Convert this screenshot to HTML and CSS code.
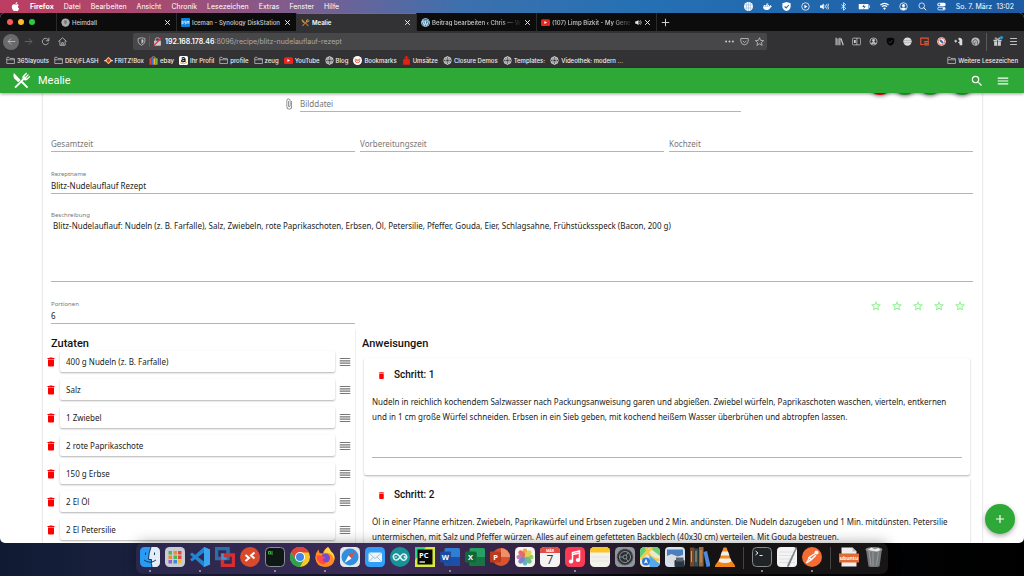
FILE: index.html
```html
<!DOCTYPE html>
<html lang="de">
<head>
<meta charset="utf-8">
<title>Mealie</title>
<link rel="stylesheet" href="styles.css">
</head>
<body>
<svg class="sprite" aria-hidden="true">
  <symbol id="trash" viewBox="0 0 24 24"><path d="M19,4H15.5L14.5,3H9.5L8.5,4H5V6H19M6,19A2,2 0 0,0 8,21H16A2,2 0 0,0 18,19V7H6V19Z"/></symbol>
  <symbol id="drag" viewBox="0 0 24 24"><path d="M3,15H21V13H3V15M3,19H21V17H3V19M3,11H21V9H3V11M3,5V7H21V5H3Z"/></symbol>
  <symbol id="star" viewBox="0 0 24 24"><path d="M12,15.39L8.24,17.66L9.23,13.38L5.91,10.5L10.29,10.13L12,6.09L13.71,10.13L18.09,10.5L14.77,13.38L15.76,17.66M22,9.24L14.81,8.63L12,2L9.19,8.63L2,9.24L7.45,13.97L5.82,21L12,17.27L18.18,21L16.54,13.97L22,9.24Z"/></symbol>
  <symbol id="search" viewBox="0 0 24 24"><path d="M9.5,3A6.5,6.5 0 0,1 16,9.5C16,11.11 15.41,12.59 14.44,13.73L14.71,14H15.5L20.5,19L19,20.5L14,15.5V14.71L13.73,14.44C12.59,15.41 11.11,16 9.5,16A6.5,6.5 0 0,1 3,9.5A6.5,6.5 0 0,1 9.5,3M9.5,5C7,5 5,7 5,9.5C5,12 7,14 9.5,14C12,14 14,12 14,9.5C14,7 12,5 9.5,5Z"/></symbol>
  <symbol id="menu" viewBox="0 0 24 24"><path d="M3,6H21V8H3V6M3,11H21V13H3V11M3,16H21V18H3V16Z"/></symbol>
  <symbol id="plus" viewBox="0 0 24 24"><path d="M19,13H13V19H11V13H5V11H11V5H13V11H19V13Z"/></symbol>
  <symbol id="close" viewBox="0 0 24 24"><path d="M4 4L20 20M20 4L4 20" stroke="currentColor" stroke-width="3.4" fill="none"/></symbol>
  <symbol id="folder" viewBox="0 0 24 24"><path d="M2 20V5a1.500 1.500 0 0 1 1.500-1.500H8l2.500 3H21a1.500 1.500 0 0 1 1.500 1.500V20zM2 10h20" stroke="currentColor" stroke-width="1.900" fill="none" opacity=".8"/></symbol>
  <symbol id="globe" viewBox="0 0 24 24"><g stroke="currentColor" stroke-width="2" fill="none"><circle cx="12" cy="12" r="10"/><ellipse cx="12" cy="12" rx="4.500" ry="10"/><path d="M3 8h18M3 16h18"/></g></symbol>
  <symbol id="cutlery" viewBox="0 0 24 24"><path d="M2.500 2.500C1 6 2 9 4.500 11.200L8 14.200 10.800 11.400zM13.400 13L20.500 20.100 18.800 21.800 11.700 14.700 4.700 21.800 3 20.100 13.300 9.800C12.500 8 13.300 6.700 14.500 5.500L18 2l1 1-3.300 3.800.8.800L20.300 4l1.100 1.100L17.700 8.800l.8.800L22.200 6.300l1 1-3.500 3.500C18.200 12.200 16.500 12.500 15 11.500z"/></symbol>
</svg>

<header class="menubar">
  <nav class="menus" aria-label="Menüleiste">
    <svg class="apple" viewBox="0 0 24 24"><path d="M12.152 6.896c-.948 0-2.415-1.078-3.960-1.040-2.040.027-3.910 1.183-4.961 3.014-2.117 3.675-.546 9.103 1.519 12.090 1.013 1.454 2.208 3.090 3.792 3.039 1.520-.065 2.090-.987 3.935-.987 1.831 0 2.350.987 3.960.948 1.637-.026 2.676-1.480 3.676-2.948 1.156-1.688 1.636-3.325 1.662-3.415-.039-.013-3.182-1.221-3.220-4.857-.026-3.040 2.480-4.494 2.597-4.559-1.429-2.090-3.623-2.324-4.390-2.376-2-.156-3.675 1.090-4.610 1.090zM15.530 3.830c.843-1.012 1.400-2.427 1.245-3.830-1.207.052-2.662.805-3.532 1.818-.780.896-1.454 2.338-1.273 3.714 1.338.104 2.715-.688 3.559-1.701"/></svg>
    <button class="app">Firefox</button><button>Datei</button><button>Bearbeiten</button><button>Ansicht</button><button>Chronik</button><button>Lesezeichen</button><button>Extras</button><button>Fenster</button><button>Hilfe</button>
  </nav>
  <div class="status">
    <svg viewBox="0 0 24 24"><circle cx="12" cy="12" r="12"/><path d="M2 8h20M2 16h20M12 0v24M7 1v22M17 1v22" stroke="#8fb3d8" stroke-width="1.500"/></svg>
    <svg viewBox="0 0 24 24"><path d="M0 12h17c1-3 2-3 3-4 1 1 1.500 2 1.500 3l2.500.5c-1 2-2 2.500-4 3-2 5-6 7-11 7-6 0-9-4-9-9.500zM2 8h4v3H2zM7 8h4v3H7zM12 8h4v3h-4zM9 4h5v3H9z"/></svg>
    <svg viewBox="0 0 24 24"><path d="M12 0l11 3v8c0 7-5 11-11 13C6 22 1 18 1 11V3z"/><path d="M7 12l4 4 7-8" stroke="#2665ad" stroke-width="3" fill="none"/></svg>
    <svg viewBox="0 0 24 24"><circle cx="12" cy="12" r="10" fill="none" stroke="#fff" stroke-width="2"/><path d="M9 7l8 5-8 5z"/></svg>
    <svg viewBox="0 0 24 24"><path d="M0 9h4l6-5v16l-6-5H0z"/><path d="M13 8q3 4 0 8M17 6q5 6 0 12M21 4q7 8 0 16" stroke="#fff" stroke-width="2" fill="none"/></svg>
    <svg viewBox="0 0 24 24"><path d="M6 7l12 10-6 5V2l6 5L6 17" fill="none" stroke="#fff" stroke-width="2"/></svg>
    <svg class="battery" viewBox="0 0 32 24"><path d="M2 5h26v14H2zM29.500 9h2v6h-2z"/><path d="M17 5l-6 8h5l-2 6 7-8h-5z" fill="#2260a8"/></svg>
    <svg viewBox="0 0 24 24"><path d="M1 8q11-9 22 0M5 12.500q7-6 14 0" fill="none" stroke="#fff" stroke-width="3"/><path d="M8 16q4-3 8 0l-4 5z"/></svg>
    <svg viewBox="0 0 24 24"><circle cx="12" cy="12" r="10" fill="none" stroke="#fff" stroke-width="2"/><circle cx="12" cy="9" r="4"/><path d="M5 18q7-7 14 0-7 7-14 0"/></svg>
    <svg viewBox="0 0 24 24"><circle cx="10" cy="10" r="7.500" fill="none" stroke="#fff" stroke-width="2"/><path d="M15 15l7 7" stroke="#fff" stroke-width="2.500"/></svg>
    <svg viewBox="0 0 24 24"><rect x="1" y="2" width="22" height="9" rx="4"/><circle cx="6" cy="6.500" r="2.500" fill="#2260a8"/><rect x="2" y="14" width="20" height="7" rx="3.500" fill="none" stroke="#fff" stroke-width="2"/><circle cx="18" cy="17.500" r="3"/></svg>
    <time>So. 7. März&nbsp; 13:02</time>
  </div>
</header>

<section class="window">
  <div class="tabs">
    <div class="lights"><i class="red"></i><i class="amber"></i><i class="green"></i></div>
    <div class="tab"><svg class="fav" viewBox="0 0 24 24"><circle cx="12" cy="12" r="11" fill="#aaa"/><path d="M8 5l4 3 4-3-1 8-3 4-3-4z" fill="#777"/></svg><span>Heimdall</span><button aria-label="Tab schließen"><svg><use href="#close"/></svg></button></div>
    <div class="tab"><svg class="fav" viewBox="0 0 24 24"><rect width="24" height="24" rx="2" fill="#0d7fdc"/><path d="M3 8v8h2q3-4 0-8zM13 8h-3v4h3v4h-3M16 16V8l2.500 4L21 8v8" stroke="#fff" stroke-width="1.800" fill="none"/></svg><span>Iceman - Synology DiskStation</span><button aria-label="Tab schließen"><svg><use href="#close"/></svg></button></div>
    <div class="tab active"><svg class="fav orange"><use href="#cutlery"/></svg><span>Mealie</span><button aria-label="Tab schließen"><svg><use href="#close"/></svg></button></div>
    <div class="tab"><svg class="fav" viewBox="0 0 24 24"><circle cx="12" cy="12" r="11.500" fill="#e8f1f5"/><circle cx="12" cy="12" r="10" fill="#3a7fa5"/><path d="M3 8h5M4 8l5 12 3-9M9 8h6M10 8l5 12 4-9q0-3-2-5" stroke="#fff" stroke-width="2" fill="none"/></svg><span class="fade">Beitrag bearbeiten ‹ Chris — W</span><button aria-label="Tab schließen"><svg><use href="#close"/></svg></button></div>
    <div class="tab"><svg class="fav" viewBox="0 0 24 24"><rect y="3" width="24" height="18" rx="4" fill="#e8281f"/><path d="M9 8l7 4-7 4z" fill="#fff"/></svg><span class="fade">(107) Limp Bizkit - My Gene</span><svg class="sound" viewBox="0 0 24 24"><path d="M1 8h5l6-5v18l-6-5H1z"/><path d="M15 7q5 5 0 10M18 4q8 8 0 16" fill="none" stroke="#eee" stroke-width="2"/></svg><button aria-label="Tab schließen"><svg><use href="#close"/></svg></button></div>
    <button class="newtab" aria-label="Neuer Tab"><svg viewBox="0 0 24 24"><path d="M12 2v20M2 12h20" stroke="#ddd" stroke-width="2.500"/></svg></button>
  </div>

  <div class="navbar">
    <div class="navgroup">
      <button class="back" aria-label="Zurück"><svg viewBox="0 0 24 24"><path d="M22 12H3M11 4l-8 8 8 8"/></svg></button>
      <button class="dim" aria-label="Vor"><svg viewBox="0 0 24 24"><path d="M2 12h19M13 4l8 8-8 8"/></svg></button>
      <button aria-label="Neu laden"><svg viewBox="0 0 24 24"><path d="M20 15a8.500 8.500 0 1 1-2-9l2 3M21 2v8h-8"/></svg></button>
      <button aria-label="Startseite"><svg viewBox="0 0 24 24"><path d="M1 12L12 2l11 10M5 10v12h14V10M10 22v-7h4v7"/></svg></button>
    </div>
    <div class="urlbar">
      <svg viewBox="0 0 24 24"><path d="M12 2l9 2v8q-1 7-9 10-8-3-9-10V4z"/><path d="M12 6v12q5-2 5-6V7z" fill="#ccc" stroke="none"/></svg>
      <i class="sep"></i>
      <svg viewBox="0 0 24 24"><path d="M6 11V7q0-5 6-5t6 5v4"/><rect x="4" y="11" width="16" height="11" fill="#ccc"/><path d="M2 23L22 3" stroke="#e22850" stroke-width="3.500"/></svg>
      <div class="url" contenteditable="true" role="textbox" aria-label="Adresse"><b>192.168.178.46</b>:8096/recipe/blitz-nudelauflauf-rezept</div>
      <div class="urlactions">
        <svg viewBox="0 0 24 24"><g fill="#ccc" stroke="none"><circle cx="3" cy="12" r="2.600"/><circle cx="12" cy="12" r="2.600"/><circle cx="21" cy="12" r="2.600"/></g></svg>
        <svg viewBox="0 0 24 24"><path d="M2 4h20v7q-1 9-10 10Q3 20 2 11zM7 10l5 5 5-5"/></svg>
        <svg viewBox="0 0 24 24"><path d="M12 2l3 7 8 .7-6 5 2 7.800-7-4.500-7 4.500 2-7.800-6-5L9 9z"/></svg>
      </div>
    </div>
    <div class="tools">
      <div class="extensions">
        <svg viewBox="0 0 24 24"><path d="M3 2v20M8 4v18M13 2v20M16 4l6 18" stroke-width="3"/></svg>
        <svg viewBox="0 0 24 24"><rect x="1" y="3" width="22" height="18" rx="3"/><path d="M5 8h5v8H5z" fill="#ccc" stroke="none"/><path d="M13 3v18"/></svg>
        <svg viewBox="0 0 24 24"><circle cx="12" cy="12" r="9.500"/><circle cx="12" cy="9" r="3" fill="#ccc"/><path d="M6 17q6-6 12 0z" fill="#ccc"/></svg>
        <svg viewBox="0 0 24 24"><path d="M12 1l10 3v8q-1 8-10 11Q3 20 2 12V4z" fill="#050505" stroke="none"/><path d="M7 12l4 4 6-8" stroke="#444"/></svg>
        <svg viewBox="0 0 24 24"><circle cx="12" cy="12" r="11" fill="#ddd" stroke="none"/><path d="M2 9h20M2 15h20" stroke="#aaa"/></svg>
        <svg viewBox="0 0 24 24"><path d="M22 10V3H2v17h8M13 12h9v9h-9zM15 17h5" stroke="#e05334" stroke-width="3"/></svg>
        <svg viewBox="0 0 24 24"><circle cx="12" cy="12" r="11.500" fill="#edf0f4" stroke="none"/><circle cx="12" cy="12" r="9" stroke="#d05a4a"/><path d="M8 8l8 8" stroke="#3d6cab" stroke-width="5"/></svg>
        <svg viewBox="0 0 24 24"><path d="M12 2q8-1 10 5v15h-7v-5q-4-1-4-4 4 0 4-4l-3-2z" fill="#ddd" stroke="none"/><path d="M1 11h7M4.500 7.500v7" stroke-width="3"/></svg>
        <svg viewBox="0 0 24 24"><circle cx="12" cy="12" r="11" fill="#bbb" stroke="none"/><path d="M6 20q-3-8 2-12 8-3 9 5M10 22q-2-8 3-9M17 20v-7" stroke="#444"/></svg>
      </div>
      <i class="sep"></i>
      <button class="gift" aria-label="Neuigkeiten"><svg viewBox="0 0 24 24"><path d="M3 12h18v11H3zM1 7h22v4H1z" fill="#ccc" stroke="none"/><path d="M12 7v16" stroke="#333"/><path d="M12 7Q4 6 6 2q4-1 6 5 2-6 6-5 2 4-6 5"/></svg></button>
      <button aria-label="Menü"><svg viewBox="0 0 24 24"><path d="M3 4h18M3 12h18M3 20h18" stroke-width="2.500"/></svg></button>
    </div>
  </div>

  <nav class="bookmarks" aria-label="Lesezeichen">
    <a href="#"><svg><use href="#folder"/></svg>365layouts</a>
    <a href="#"><svg><use href="#folder"/></svg>DEV/FLASH</a>
    <a href="#"><svg viewBox="0 0 24 24"><path d="M12 2l10 10-10 10L2 12z" fill="#f6c33c"/><path d="M12 6l6 6-6 6-6-6z" fill="#d2333a"/><path d="M0 11h7v3H0zM17 11h7v3h-7z" fill="#e6ddd0"/></svg>FRITZ!Box</a>
    <a href="#"><svg viewBox="0 0 24 24"><path d="M1 6h6v17H1z" fill="#e43d3a"/><path d="M7 6h5v17H7z" fill="#3777dd"/><path d="M12 6h5v17h-5z" fill="#f2b52a"/><path d="M17 6h6v17h-6z" fill="#75b842"/><path d="M7 6q0-4 5-4t5 4" stroke="#bbb" stroke-width="2" fill="none"/></svg>ebay</a>
    <a href="#"><svg viewBox="0 0 24 24"><rect width="24" height="24" rx="4" fill="#fff"/><path d="M7 6q8-4 9 2v8M15 9q-8 0-8 4t8 1" stroke="#111" stroke-width="3" fill="none"/><path d="M3 18q9 6 18-1" stroke="#f39b23" stroke-width="2.500" fill="none"/></svg>Ihr Profil</a>
    <a href="#"><svg><use href="#folder"/></svg>profile</a>
    <a href="#"><svg><use href="#folder"/></svg>zeug</a>
    <a href="#"><svg viewBox="0 0 24 24"><rect y="3" width="24" height="18" rx="4" fill="#e8281f"/><path d="M9 8l7 4-7 4z" fill="#fff"/></svg>YouTube</a>
    <a href="#"><svg><use href="#globe"/></svg>Blog</a>
    <a href="#"><svg viewBox="0 0 24 24"><circle cx="12" cy="12" r="12" fill="#fff"/><path d="M6 7v6q0 5 6 5t6-5V7M10 8v5h4V8" stroke="#ea6255" stroke-width="2.500" fill="none"/></svg>Bookmarks</a>
    <a href="#"><svg viewBox="0 0 24 24"><path d="M3 9q9-3 18 0v14H3zM10 0h4v3h4v3h-4v4h-4V6H6V3h4z" fill="#e3220f"/></svg>Umsätze</a>
    <a href="#"><svg><use href="#globe"/></svg>Closure Demos</a>
    <a href="#"><svg><use href="#globe"/></svg>Templates:</a>
    <a href="#"><svg><use href="#globe"/></svg>Videothek: modern ...</a>
    <a class="more" href="#"><svg><use href="#folder"/></svg>Weitere Lesezeichen</a>
  </nav>

  <div class="page">
    <header class="appbar">
      <svg class="logo"><use href="#cutlery"/></svg>
      <h1>Mealie</h1>
      <button aria-label="Suchen"><svg><use href="#search"/></svg></button>
      <button aria-label="Menü"><svg><use href="#menu"/></svg></button>
    </header>
    <main class="recipe">
      <div class="actions"><button class="del" aria-label="Löschen"></button><button aria-label="Code"></button><button aria-label="Bild"></button><button class="save" aria-label="Speichern"></button></div>
      <div class="file">
        <svg viewBox="0 0 24 24"><path d="M16.500,6V17.500A4,4 0 0,1 12.500,21.500A4,4 0 0,1 8.500,17.500V5A2.500,2.500 0 0,1 11,2.500A2.500,2.500 0 0,1 13.500,5V15.500A1,1 0 0,1 12.500,16.500A1,1 0 0,1 11.500,15.500V6H10V15.500A2.500,2.500 0 0,0 12.500,18A2.500,2.500 0 0,0 15,15.500V5A4,4 0 0,0 11,1A4,4 0 0,0 7,5V17.500A5.500,5.500 0 0,0 12.500,23A5.500,5.500 0 0,0 18,17.500V6H16.500Z"/></svg>
        <input aria-label="Bilddatei" placeholder="Bilddatei">
      </div>
      <div class="times">
        <input aria-label="Gesamtzeit" placeholder="Gesamtzeit">
        <input aria-label="Vorbereitungszeit" placeholder="Vorbereitungszeit">
        <input aria-label="Kochzeit" placeholder="Kochzeit">
      </div>
      <div class="field name"><label for="name">Rezeptname</label><input id="name" value="Blitz-Nudelauflauf Rezept"></div>
      <div class="field description"><label for="desc">Beschreibung</label><textarea id="desc"> Blitz-Nudelauflauf: Nudeln (z. B. Farfalle), Salz, Zwiebeln, rote Paprikaschoten, Erbsen, Öl, Petersilie, Pfeffer, Gouda, Eier, Schlagsahne, Frühstücksspeck (Bacon, 200 g)</textarea></div>
      <div class="serving">
        <div class="field"><label for="portions">Portionen</label><input id="portions" value="6"></div>
        <div class="rating">
          <button aria-label="1 Stern"><svg><use href="#star"/></svg></button><button aria-label="2 Sterne"><svg><use href="#star"/></svg></button><button aria-label="3 Sterne"><svg><use href="#star"/></svg></button><button aria-label="4 Sterne"><svg><use href="#star"/></svg></button><button aria-label="5 Sterne"><svg><use href="#star"/></svg></button>
        </div>
      </div>
      <div class="columns">
        <section class="ingredients">
          <h2>Zutaten</h2>
          <ul>
            <li><button aria-label="Löschen"><svg><use href="#trash"/></svg></button><input aria-label="Zutat 1" value="400 g Nudeln (z. B. Farfalle)"><svg class="drag"><use href="#drag"/></svg></li>
            <li><button aria-label="Löschen"><svg><use href="#trash"/></svg></button><input aria-label="Zutat 2" value="Salz"><svg class="drag"><use href="#drag"/></svg></li>
            <li><button aria-label="Löschen"><svg><use href="#trash"/></svg></button><input aria-label="Zutat 3" value="1 Zwiebel"><svg class="drag"><use href="#drag"/></svg></li>
            <li><button aria-label="Löschen"><svg><use href="#trash"/></svg></button><input aria-label="Zutat 4" value="2 rote Paprikaschote"><svg class="drag"><use href="#drag"/></svg></li>
            <li><button aria-label="Löschen"><svg><use href="#trash"/></svg></button><input aria-label="Zutat 5" value="150 g Erbse"><svg class="drag"><use href="#drag"/></svg></li>
            <li><button aria-label="Löschen"><svg><use href="#trash"/></svg></button><input aria-label="Zutat 6" value="2 El Öl"><svg class="drag"><use href="#drag"/></svg></li>
            <li><button aria-label="Löschen"><svg><use href="#trash"/></svg></button><input aria-label="Zutat 7" value="2 El Petersilie"><svg class="drag"><use href="#drag"/></svg></li>
          </ul>
        </section>
        <section class="steps">
          <h2>Anweisungen</h2>
          <article>
            <h3><button aria-label="Löschen"><svg><use href="#trash"/></svg></button>Schritt: 1</h3>
            <textarea aria-label="Schritt 1">Nudeln in reichlich kochendem Salzwasser nach Packungsanweisung garen und abgießen. Zwiebel würfeln, Paprikaschoten waschen, vierteln, entkernen
und in 1 cm große Würfel schneiden. Erbsen in ein Sieb geben, mit kochend heißem Wasser überbrühen und abtropfen lassen.</textarea>
          </article>
          <article>
            <h3><button aria-label="Löschen"><svg><use href="#trash"/></svg></button>Schritt: 2</h3>
            <textarea aria-label="Schritt 2">Öl in einer Pfanne erhitzen. Zwiebeln, Paprikawürfel und Erbsen zugeben und 2 Min. andünsten. Die Nudeln dazugeben und 1 Min. mitdünsten. Petersilie
untermischen, mit Salz und Pfeffer würzen. Alles auf einem gefetteten Backblech (40x30 cm) verteilen. Mit Gouda bestreuen.</textarea>
          </article>
        </section>
      </div>
    </main>
    <button class="fab" aria-label="Neues Rezept"><svg><use href="#plus"/></svg></button>
  </div>
</section>

<footer class="desktop">
  <nav class="dock" aria-label="Dock">
    <button class="run" aria-label="Finder"><svg viewBox="0 0 40 40"><rect width="40" height="40" rx="9" fill="#2b9af3"/><path d="M22 0h9a9 9 0 0 1 9 9v22a9 9 0 0 1-9 9h-7q-2-8-1-15h-6q1-15 5-25z" fill="#e4edf5"/><path d="M11 11v5M29 11v5M8 26q12 9 24 0M22 0q-5 12-5 25h6q-1 8 1 15" stroke="#143a62" stroke-width="2" fill="none"/></svg></button>
    <button aria-label="Launchpad"><svg viewBox="0 0 40 40"><rect width="40" height="40" rx="9" fill="#c8ccd3"/><path fill="#45bb58" d="M7 8h7v7H7zM17 17h7v7h-7z"/><path fill="#f08a2b" d="M17 8h7v7h-7zM7 17h7v7H7z"/><path fill="#e44444" d="M26 8h7v7h-7zM26 17h7v7h-7z"/><path fill="#8f5ccd" d="M7 26h7v7H7z"/><path fill="#3d8ae4" d="M17 26h7v7h-7z"/><path fill="#f0bc30" d="M26 26h7v7h-7z"/></svg></button>
    <button class="run" aria-label="Visual Studio Code"><svg viewBox="0 0 40 40"><path d="M28 0l12 5v30l-12 5L0 15l4-4 24 18V11L4 29l-4-4z" fill="#2385cf"/><path d="M28 0l12 5v30l-12 5z" fill="#3ba6ef"/></svg></button>
    <button aria-label="VMware"><svg viewBox="0 0 40 40"><path d="M3 3h23v20H3z" fill="none" stroke="#286fab" stroke-width="7"/><path d="M15 16h22v21H15z" fill="none" stroke="#d62e32" stroke-width="7"/><path d="M15 13V23h8" fill="none" stroke="#4a91cd" stroke-width="5"/></svg></button>
    <button aria-label="Remote Desktop"><svg viewBox="0 0 40 40"><circle cx="20" cy="20" r="20" fill="#d94a2d"/><path d="M11 16l7 6-7 6M29 11l-7 6 7 6" stroke="#fff" stroke-width="4" fill="none"/></svg></button>
    <button class="run" aria-label="iTerm"><svg viewBox="0 0 40 40"><rect x="1" y="1" width="38" height="38" rx="8" fill="#101816" stroke="#899092" stroke-width="2"/><path d="M7 9h4v5H7zM14 8v8" stroke="#38b93b" stroke-width="2" fill="none"/></svg></button>
    <button aria-label="Chrome"><svg viewBox="0 0 40 40"><circle cx="20" cy="20" r="20" fill="#f7c928"/><path d="M2 11A20 20 0 0 1 38 11H20l-8 14z" fill="#dd453b"/><path d="M2 11A20 20 0 0 0 20 40l8-15H12z" fill="#2fa250"/><circle cx="20" cy="20" r="10" fill="#fff"/><circle cx="20" cy="20" r="8" fill="#4285e8"/></svg></button>
    <button class="run" aria-label="Firefox"><svg viewBox="0 0 40 40"><path d="M26 0q5 5 6 9 9 7 7 17-3 14-19 14Q3 39 1 24-1 14 7 5l2 7 7 1Q17 5 26 0z" fill="#ff8b22"/><path d="M26 0q5 5 6 9 9 7 6 17Q34 9 18 12q1-7 8-12z" fill="#ffd83d"/><circle cx="21" cy="22" r="9" fill="#764bd5"/><path d="M3 18q6-3 12 1l6 1q-2 4-6 4 2 8 10 6-9 8-17 1Q3 26 3 18z" fill="#ff4b46"/></svg></button>
    <button aria-label="Safari"><svg viewBox="0 0 40 40"><rect width="40" height="40" rx="9" fill="#e3e7ea"/><circle cx="20" cy="20" r="17" fill="#318fdf"/><path d="M31 8L23 23l-6-6z" fill="#ee493e"/><path d="M9 32l8-15 6 6z" fill="#fff"/></svg></button>
    <button aria-label="Mail"><svg viewBox="0 0 40 40"><rect width="40" height="40" rx="9" fill="#309ff5"/><rect x="7" y="11" width="27" height="19" rx="3" fill="#edf3f7"/><path d="M8 12l12 11 13-11M8 29l9-9M33 29l-9-9" stroke="#9ab3c5" stroke-width="1.500" fill="none"/></svg></button>
    <button aria-label="Arduino"><svg viewBox="0 0 40 40"><circle cx="20" cy="20" r="20" fill="#179299"/><path d="M20 20q-6-9-11-5t0 10q5 4 11-5t11-5q5 5 0 10t-11-5z" stroke="#e4f5f3" stroke-width="3" fill="none"/><path d="M9 20h5M27 20h5M29.500 17.500v5" stroke="#e4f5f3" stroke-width="2"/></svg></button>
    <button aria-label="PyCharm"><svg viewBox="0 0 40 40"><path d="M0 0h40v40H0z" fill="#d7ea3f"/><path d="M0 0h22L0 26z" fill="#28cf8a"/><path d="M5 5h30v30H5z" fill="#080808"/><text x="8" y="21" class="ico pc">PC</text><path d="M9 30h11" stroke="#fff" stroke-width="2.500"/></svg></button>
    <button class="run" aria-label="Word"><svg viewBox="0 0 40 40"><rect x="9" y="2" width="31" height="36" rx="3" fill="#2f7ed3"/><path d="M9 20h31v15a3 3 0 0 1-3 3H12a3 3 0 0 1-3-3z" fill="#1b4fa8"/><rect y="9" width="22" height="22" rx="2" fill="#1b4c9e"/><text x="11" y="26" class="ico">W</text></svg></button>
    <button aria-label="Excel"><svg viewBox="0 0 40 40"><rect x="9" y="2" width="31" height="36" rx="3" fill="#25a163"/><path d="M24 20h16v15a3 3 0 0 1-3 3H12a3 3 0 0 1-3-3V11h15z" fill="#177543"/><rect y="9" width="22" height="22" rx="2" fill="#126638"/><text x="11" y="26" class="ico">X</text></svg></button>
    <button aria-label="PowerPoint"><svg viewBox="0 0 40 40"><circle cx="22" cy="20" r="18" fill="#d9532f"/><path d="M22 2a18 18 0 0 1 18 18H22z" fill="#f18f6c"/><rect y="9" width="22" height="22" rx="2" fill="#bd3b1d"/><text x="11" y="26" class="ico">P</text></svg></button>
    <button aria-label="Fotos"><svg viewBox="0 0 40 40"><rect width="40" height="40" rx="9" fill="#f5f4f1"/><g opacity=".85"><ellipse cx="20" cy="11" rx="5" ry="8" fill="#f39b28"/><ellipse cx="20" cy="29" rx="5" ry="8" fill="#41a7cc"/><ellipse cx="11" cy="20" rx="8" ry="5" fill="#bb67b2"/><ellipse cx="29" cy="20" rx="8" ry="5" fill="#8bc646"/><g transform="rotate(45 20 20)"><ellipse cx="20" cy="11" rx="5" ry="8" fill="#ddce36"/><ellipse cx="20" cy="29" rx="5" ry="8" fill="#6873bf"/><ellipse cx="11" cy="20" rx="8" ry="5" fill="#e25557"/><ellipse cx="29" cy="20" rx="8" ry="5" fill="#53b477"/></g></g></svg></button>
    <button aria-label="Kalender"><svg viewBox="0 0 40 40"><rect width="40" height="40" rx="9" fill="#f5f4f3"/><path d="M9 0h22a9 9 0 0 1 9 9v3H0V9a9 9 0 0 1 9-9z" fill="#e34b46"/><text x="20" y="10" class="ico mon">MÄR</text><text x="20" y="34" class="ico day">7</text></svg></button>
    <button class="run" aria-label="Musik"><svg viewBox="0 0 40 40"><rect width="40" height="40" rx="9" fill="#f83b54"/><path d="M15 28V11l14-3v17M15 15l14-3" stroke="#fff" stroke-width="3" fill="none"/><ellipse cx="12" cy="29" rx="4.500" ry="4" fill="#fff"/><ellipse cx="26" cy="26" rx="4.500" ry="4" fill="#fff"/></svg></button>
    <button aria-label="Notizen"><svg viewBox="0 0 40 40"><rect width="40" height="40" rx="9" fill="#f3f1ec"/><path d="M9 0h22a9 9 0 0 1 9 9v2H0V9a9 9 0 0 1 9-9z" fill="#f8c522"/><path d="M3 20h34M3 28h34" stroke="#d7d5d0"/></svg></button>
    <button aria-label="Systemeinstellungen"><svg viewBox="0 0 40 40"><rect width="40" height="40" rx="9" fill="#90969b"/><circle cx="20" cy="20" r="15" fill="#292d31" stroke="#383c40" stroke-width="3" stroke-dasharray="2 1"/><g fill="none" stroke="#8c9297" stroke-width="2"><circle cx="20" cy="20" r="11"/><circle cx="20" cy="20" r="4"/><path d="M9 20h7M22 17l5-7M22 23l5 7"/></g></svg></button>
    <button aria-label="Karten"><svg viewBox="0 0 40 40"><rect width="40" height="40" rx="9" fill="#efe7cc"/><path d="M0 10Q1 0 10 0h9L0 22z" fill="#65cd70"/><path d="M17 0h14q9 0 9 9v9z" fill="#6bcf78"/><path d="M1 24L24 1M12 1q6 24 27 25" stroke="#f4c848" stroke-width="5" fill="none"/><path d="M19 17l21 17q-2 6-9 6H19z" fill="#55a8ea"/><circle cx="12" cy="29" r="8" fill="#2a79df"/><path d="M12 23l4 10-4-2-4 2z" fill="#fff"/></svg></button>
    <button aria-label="Vorschau"><svg viewBox="0 0 40 40"><rect width="40" height="40" rx="8" fill="#d7e3ef"/><path d="M4 5h32v17H4z" fill="#4b7fbd"/><path d="M4 18l9-4 12 5 11-3v17H4z" fill="#d9dde0"/><rect x="19" y="26" width="20" height="14" rx="2" fill="#29353e"/><path d="M22 21h15v8H22z" fill="#59666f"/></svg></button>
    <button aria-label="Calibre"><svg viewBox="0 0 40 40"><path d="M0 1h9v38H0z" fill="#754928"/><path d="M9 3h8v36H9z" fill="#30505c"/><path d="M18 0h9v39h-9z" fill="#9d6941"/><path d="M27 10l7-2 7 30-8 2z" fill="#4a8cdf"/><path d="M3 8v22M12 8v22M22 6v25" stroke="#c9a05c" stroke-width="2"/></svg></button>
    <button aria-label="VLC"><svg viewBox="0 0 40 40"><path d="M7 27h26l7 10v3H0v-3z" fill="#f28316"/><path d="M17 1h6l10 29q-13 7-26 0z" fill="#f38d21"/><path d="M14 9h12l3 8H11zM9 23h22l2 6q-13 6-26 0z" fill="#f1efe8"/></svg></button>
    <i></i>
    <button class="run" aria-label="Terminal"><svg viewBox="0 0 40 40"><rect x="1" y="1" width="38" height="38" rx="8" fill="#202426" stroke="#858a8d" stroke-width="2"/><path d="M7 8l5 4-5 4M15 17h6" stroke="#eee" stroke-width="2" fill="none"/></svg></button>
    <button aria-label="TextEdit"><svg viewBox="0 0 40 40"><rect width="40" height="40" rx="8" fill="#f4f4f4"/><path d="M4 10h32M4 17h32M4 24h32M4 31h32" stroke="#ccc"/><path d="M38 0l2 2-16 37-4 1 1-5z" fill="#7a8790"/></svg></button>
    <button class="run" aria-label="Postman"><svg viewBox="0 0 40 40"><circle cx="20" cy="20" r="20" fill="#f56b34"/><circle cx="29" cy="11" r="4" fill="#fff"/><path d="M26 13L14 21l5 4 9-9M14 23l-5 9 9-6" stroke="#fff" stroke-width="3" fill="none"/></svg></button>
    <i></i>
    <button aria-label="Ubuntu"><svg viewBox="0 0 40 40"><path d="M5 1h22l8 8v30H5z" fill="#eee"/><rect y="13" width="40" height="18" fill="#e26a37"/><text x="20" y="25" class="ico ubu">ubuntu</text><path d="M27 1v8h8" fill="#bbb"/></svg></button>
    <button aria-label="Papierkorb"><svg viewBox="0 0 40 40"><path d="M4 4h32l-5 35q-11 3-22 0z" fill="#73777a"/><path d="M10 8l4 29M18 8v30M29 8l-4 29" stroke="#989c9e" stroke-width="2"/><ellipse cx="20" cy="5" rx="17" ry="5" fill="#8b8f91"/><path d="M8 6l7-5 6 4 8-3 4 4-7 3z" fill="#ededed"/></svg></button>
  </nav>
</footer>
</body>
</html>
```
FILE: styles.css
```css
* { box-sizing: border-box; }
body {
  margin: 0;
  height: 100vh;
  overflow: hidden;
  display: flex;
  flex-direction: column;
  background: linear-gradient(90deg, #101b33, #1b2140 15%, #06070b 62%, #000);
  font-family: Roboto, "Liberation Sans", sans-serif;
  font-size: 8px;
  color: #222;
}
button, input, textarea { font: inherit; color: inherit; border: 0; padding: 0; margin: 0; background: none; outline: 0; }
button { display: flex; align-items: center; justify-content: center; }
textarea { display: block; resize: none; overflow: hidden; }
svg { display: block; flex: none; fill: currentColor; }
.sprite { position: absolute; width: 0; height: 0; }

.menubar {
  height: 13px;
  flex: none;
  display: flex;
  justify-content: space-between;
  align-items: center;
  padding: 0 10px 0 11px;
  background: linear-gradient(90deg, #bd3d61, #a84a70 15%, #7a5f92 30%, #3d70ae 45%, #2571b3 62%, #1c5ba4);
  color: #fff;
  font: 7px Inter, "Liberation Sans", sans-serif;
}
.menus { display: flex; align-items: center; gap: 10px; }
.apple { width: 9px; height: 9px; }
.app { font-weight: 700; }
.status { display: flex; align-items: center; gap: 10px; }
.status svg { width: 9px; height: 9px; }
.status .battery { width: 12px; }

.window {
  flex: 1;
  min-height: 0;
  display: flex;
  flex-direction: column;
  border-radius: 5px;
  overflow: hidden;
  background: #fff;
}
.tabs, .navbar, .bookmarks { flex: none; color: #eee; background: #323234; font-family: Inter, "Liberation Sans", sans-serif; }
.tabs { height: 18px; display: flex; background: #0c0c0d; font-size: 6px; font-weight: 500; }
.lights { width: 56px; display: flex; align-items: center; gap: 5px; padding-left: 7px; }
.lights i { width: 6px; height: 6px; border-radius: 50%; }
.red { background: #fc5b57; }
.amber { background: #fdbc2e; }
.green { background: #2fc840; }
.tab {
  width: 120px;
  display: flex;
  align-items: center;
  gap: 2px;
  padding: 0 5px 0 4px;
  border-left: 1px solid #2b2b2d;
}
.tab span { flex: 1; min-width: 0; overflow: hidden; white-space: nowrap; color: #ccc; }
.tab .fade { mask-image: linear-gradient(90deg, #000 75%, transparent); }
.tab.active { background: #323234; border-left-color: #323234; border-top: 1px solid #2e7fd8; }
.tab.active span { color: #fff; font-weight: 600; }
.fav { width: 9px; height: 9px; }
.orange { color: #cf8b3d; }
.sound { width: 7px; height: 7px; }
.tab button svg { width: 7px; height: 7px; }
.newtab { width: 18px; border-left: 1px solid #2b2b2d; }
.newtab svg { width: 9px; height: 9px; }

.navbar { height: 21px; display: grid; grid-template-columns: 133px 1fr 257px; align-items: center; }
.navbar svg { width: 9px; height: 9px; fill: none; stroke: #ccc; stroke-width: 2; }
.navgroup { display: flex; align-items: center; gap: 1px; padding-left: 3px; }
.navgroup button { width: 16px; height: 16px; }
.back { border-radius: 50%; background: #6a6a6c; }
.dim { opacity: .4; }
.urlbar { height: 17px; display: flex; align-items: center; gap: 3px; padding: 0 3px 0 4px; border-radius: 2px; background: #474749; }
.urlactions { display: flex; gap: 6px; }
.sep { width: 1px; height: 11px; background: #5a5a5c; }
.url { flex: 1; font-size: 7px; color: #aaa; white-space: nowrap; overflow: hidden; }
.url b { color: #fff; font-weight: 600; }
.tools { display: flex; align-items: center; justify-content: flex-end; gap: 4px; padding-right: 5px; }
.extensions { display: flex; gap: 8px; padding-right: 2px; }
.tools .sep { height: 18px; }
.gift { position: relative; }
.gift::after { content: ""; position: absolute; right: 0; top: -1px; width: 3px; height: 3px; border-radius: 50%; background: #12a8ee; }
.tools > button { width: 12px; }

.bookmarks { height: 16px; display: flex; align-items: center; gap: 5px; padding: 0 6px; font-size: 6px; font-weight: 500; }
.bookmarks a { display: flex; align-items: center; gap: 2px; color: inherit; text-decoration: none; white-space: nowrap; }
.bookmarks svg { width: 9px; height: 9px; }
.bookmarks .more { margin-left: auto; }

.page { position: relative; flex: 1; min-height: 0; display: flex; flex-direction: column; }
.appbar {
  position: relative;
  z-index: 2;
  height: 25px;
  flex: none;
  display: flex;
  align-items: center;
  gap: 12px;
  padding: 0 14px 0 12px;
  background: #2ea836;
  color: #fff;
  box-shadow: 0 1px 3px rgba(0, 0, 0, .4);
}
.logo { width: 19px; height: 19px; }
.appbar h1 { flex: 1; margin: 0 0 0 -5px; font-size: 11px; font-weight: 400; }
.appbar button svg { width: 14px; height: 14px; }

.recipe {
  position: relative;
  flex: 1;
  min-height: 0;
  margin: 0 42px 0 43px;
  padding: 3px 9px 0 8px;
  box-shadow: 0 0 2px rgba(0, 0, 0, .25);
  font-family: "Noto Sans", Roboto, sans-serif;
}
.recipe input, .recipe textarea { width: 100%; border-bottom: 1px solid #b4b4b4; }
.recipe input::placeholder { color: #777; opacity: 1; }
.actions { position: absolute; right: 9px; top: -20px; display: flex; gap: 3px; }
.actions button { width: 22px; height: 22px; border-radius: 50%; background: #2ea836; box-shadow: 0 1px 4px rgba(0, 0, 0, .5); }
.actions .del { background: #f00; }
.actions .save { margin-left: 7px; }
.file { display: flex; align-items: center; gap: 5px; margin: 0 232px; }
.file svg { width: 12px; height: 12px; color: #777; }
.file input { height: 16px; }
.times { display: grid; grid-template-columns: repeat(3, 1fr); gap: 5px; margin-top: 23px; }
.times input { height: 17px; }
.field label { display: block; height: 8px; font-size: 6px; line-height: 8px; color: #777; }
.field input { display: block; height: 16px; }
.name { margin-top: 18px; }
.description { margin-top: 17px; }
.description textarea { height: 63px; line-height: 13px; }
.serving { display: flex; justify-content: space-between; align-items: flex-start; margin-top: 18px; }
.serving .field { width: 33%; }
.rating { display: flex; gap: 9px; padding-right: 7px; color: #80f080; }
.rating svg { width: 12px; height: 12px; }
.columns { display: grid; grid-template-columns: 313px 1fr; margin: 6px -9px 0 -8px; }
.columns h2, .columns h3 { font-family: Roboto, "Liberation Sans", sans-serif; font-weight: 500; color: #111; }
.columns h2 { margin: 0; font-size: 11px; line-height: 14px; }
.columns button { color: #f00; }
.ingredients { padding: 7px 3px 0 2px; border-right: 1px solid #eee; }
.ingredients h2 { padding-left: 6px; }
.ingredients ul { list-style: none; margin: 0; padding: 0; display: grid; gap: 7px; }
.ingredients li { display: flex; align-items: center; height: 21px; }
.ingredients button svg { width: 12px; height: 12px; }
.ingredients input { flex: 1; min-width: 0; height: 21px; margin: 0 3px; padding: 0 6px; border: 0; border-radius: 2px; box-shadow: 0 1px 2px rgba(0, 0, 0, .3); }
.drag { width: 14px; height: 14px; color: #777; }
.steps { padding: 7px 12px 0 6px; }
.steps article { margin: 7px 0 0 2px; padding: 9px 8px 17px; border-radius: 2px; box-shadow: 0 1px 2px rgba(0, 0, 0, .3); }
.steps article + article { margin-top: 3px; }
.steps h3 { display: flex; align-items: center; gap: 8px; margin: 0 0 11px 5px; font-size: 10px; line-height: 16px; }
.steps h3 svg { width: 9px; height: 9px; }
.steps textarea { height: 64px; line-height: 15px; white-space: pre; }
.fab { position: absolute; z-index: 1; right: 9px; bottom: 9px; width: 30px; height: 30px; border-radius: 50%; background: #2ea836; color: #fff; box-shadow: 0 2px 5px rgba(0, 0, 0, .35); }
.fab svg { width: 14px; height: 14px; }

.desktop { flex: none; height: 33px; display: flex; justify-content: center; align-items: flex-start; }
.dock {
  display: flex;
  height: 31px;
  gap: 5px;
  padding: 4px 4px 0;
  border-radius: 7px;
  background: linear-gradient(90deg, #29274c, #3d2b58 35%, #2e2039 60%, #151214 72%, #171516);
  box-shadow: 0 0 14px rgba(0, 0, 0, .35);
  position: relative;
  z-index: 3;
}
.dock button { position: relative; width: 20px; height: 20px; }
.dock button svg { width: 20px; height: 20px; }
.dock .run::after { content: ""; position: absolute; left: 9px; top: 23px; width: 2px; height: 2px; border-radius: 50%; background: #aaa; }
.dock i { width: 1px; height: 22px; margin: 0 3px; background: #444; }
.ico { font: 700 15px "Open Sans", sans-serif; fill: #fff; text-anchor: middle; }
.pc { text-anchor: start; }
.mon { font-size: 7px; }
.day { font-size: 24px; font-weight: 400; fill: #333; }
.ubu { font-size: 10px; }
```
